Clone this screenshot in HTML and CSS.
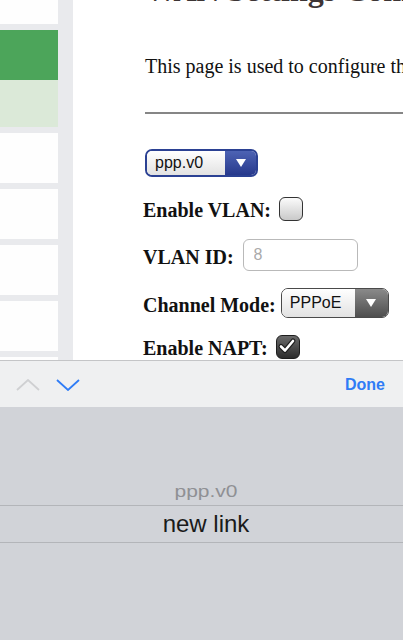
FILE: index.html
```html
<!DOCTYPE html>
<html lang="en">
  <head>
    <meta charset="UTF-8" />
    <meta name="viewport" content="width=device-width, initial-scale=1.0" />
    <title>WAN Settings</title>
    <link rel="stylesheet" href="styles.css">
  </head>
  <body>
    <div class="screen">
      <div class="page">
        <aside class="sidebar">
          <div class="nav-item nav-top"></div>
          <div class="nav-group">
            <div class="nav-item nav-active"></div>
            <div class="nav-item nav-sub"></div>
          </div>
          <div class="nav-item"></div>
          <div class="nav-item"></div>
          <div class="nav-item"></div>
          <div class="nav-item"></div>
          <div class="nav-item"></div>
        </aside>

        <main class="content">
          <h1>WAN Settings Configuration</h1>
          <p class="intro">This page is used to configure the parameters for your WAN.</p>
          <hr class="rule" />

          <div class="fields">
            <div class="row">
              <div class="select select-blue">
                <span class="select-value">ppp.v0</span>
                <span class="select-arrow">
                  <svg width="12" height="10" viewBox="0 0 12 10"><path d="M1 1 L11 1 L6 9 Z" fill="#fff" /></svg>
                </span>
              </div>
            </div>

            <div class="row">
              <label class="label">Enable VLAN:</label>
              <span class="check"></span>
            </div>

            <div class="row">
              <label class="label">VLAN ID:</label>
              <input class="text-input" type="text" placeholder="8" />
            </div>

            <div class="row">
              <label class="label">Channel Mode:</label>
              <div class="select select-gray">
                <span class="select-value">PPPoE</span>
                <span class="select-arrow">
                  <svg width="12" height="10" viewBox="0 0 12 10"><path d="M1 1 L11 1 L6 9 Z" fill="#fff" /></svg>
                </span>
              </div>
            </div>

            <div class="row row-last">
              <label class="label">Enable NAPT:</label>
              <span class="check checked">
                <svg width="24" height="24" viewBox="0 0 24 24">
                  <path d="M6 12.5 L10 16.5 L18 7" fill="none" stroke="#1e1e1e" stroke-width="5" stroke-linecap="round" stroke-linejoin="round" />
                  <path d="M6 12.5 L10 16.5 L18 7" fill="none" stroke="#fff" stroke-width="2.6" stroke-linecap="round" stroke-linejoin="round" />
                </svg>
              </span>
            </div>
          </div>
        </main>
      </div>

      <!-- barre du clavier iOS -->
      <div class="toolbar">
        <div class="toolbar-arrows">
          <svg width="24" height="12" viewBox="0 0 24 12"><path d="M1 11 L12 1 L23 11" fill="none" stroke="#cfd0d2" stroke-width="1.8" /></svg>
          <svg width="24" height="12" viewBox="0 0 24 12"><path d="M1 1 L12 11 L23 1" fill="none" stroke="#2f7cf6" stroke-width="1.8" /></svg>
        </div>
        <span class="done">Done</span>
      </div>

      <div class="picker">
        <div class="picker-item picker-dim">ppp.v0</div>
        <div class="picker-item picker-selected">new link</div>
      </div>
    </div>
  </body>
</html>
```

FILE: styles.css
```css
* {
  margin: 0;
  padding: 0;
  box-sizing: border-box;
}

body {
  width: 403px;
  height: 640px;
  overflow: hidden;
  background-color: #fff;
  font-family: "Liberation Serif", serif;
}

.screen {
  display: flex;
  flex-direction: column;
  height: 640px;
}

.page {
  display: flex;
  height: 360px;
  overflow: hidden;
}

.sidebar {
  flex: 0 0 73px;
  display: flex;
  flex-direction: column;
  gap: 6px;
  padding-right: 15px;
  background-color: #e9eaed;
}

.nav-item {
  flex: 0 0 50px;
  background-color: #fefefe;
}

.nav-top {
  flex-basis: 24px;
}

.nav-group {
  display: flex;
  flex-direction: column;
}

.nav-active {
  background-color: #4ca55a;
}

.nav-sub {
  flex-basis: 47px;
  background-color: #dbe9d8;
}

.content {
  flex: 1;
  padding-left: 72px;
  white-space: nowrap;
  overflow: hidden;
  color: #111;
}

.content h1 {
  margin-top: -28px;
  font-size: 32px;
  line-height: 36px;
  color: #3d3535;
}

.intro {
  margin-top: 47px;
  font-size: 20px;
  line-height: 23px;
}

.rule {
  margin-top: 34px;
  height: 2px;
  border: none;
  background-color: #868686;
}

.fields {
  display: flex;
  flex-direction: column;
  gap: 17px;
  margin-top: 35px;
}

.row {
  display: flex;
  align-items: center;
  gap: 8px;
  min-height: 28px;
}

.row-last {
  margin-top: -3px;
}

.label {
  margin-left: -2px;
  font-weight: 700;
  font-size: 20px;
  line-height: 23px;
  padding-top: 5px;
}

.select {
  display: flex;
  height: 28px;
  border-radius: 7px;
  overflow: hidden;
  font-family: "Liberation Sans", sans-serif;
  font-size: 16px;
  color: #111;
}

.select-value {
  display: flex;
  align-items: center;
  flex: 1;
  padding-left: 8px;
  background: linear-gradient(#ffffff, #e2e2e2);
}

.select-arrow {
  display: flex;
  align-items: center;
  justify-content: center;
  width: 31px;
}

.select-blue {
  width: 113px;
  border: 2px solid #2b4193;
}

.select-blue .select-arrow {
  background: linear-gradient(#4d63b4, #27398c);
}

.select-gray {
  width: 108px;
  height: 30px;
  margin-left: -3px;
  border: 1.5px solid #4a4a4a;
}

.select-gray .select-arrow {
  width: 33px;
  background: linear-gradient(#8a8a8a, #4e4e4e);
}

.check {
  display: block;
  width: 24px;
  height: 24px;
  border: 1.5px solid #333;
  border-radius: 6px;
  background: linear-gradient(#fbfbfb, #c9c9c9);
  margin-top: 1px;
}

.check.checked {
  border-color: #1e1e1e;
  background: linear-gradient(#6a6a6a, #2c2c2c);
}

.check svg {
  display: block;
  margin: -1.5px;
}

.text-input {
  width: 115px;
  height: 32px;
  margin-left: 1px;
  padding-left: 10px;
  border: 1px solid #b9b9b9;
  border-radius: 6px;
  font-family: "Liberation Sans", sans-serif;
  font-size: 16px;
  outline: none;
}

.text-input::placeholder {
  color: #aaa;
}

.toolbar {
  display: flex;
  align-items: center;
  justify-content: space-between;
  height: 47px;
  padding: 0 18px 0 16px;
  border-top: 1px solid #c4c5c7;
  background-color: #eff0f1;
}

.toolbar-arrows {
  display: flex;
  gap: 16px;
  margin-top: 1px;
}

.toolbar-arrows svg {
  display: block;
}

.done {
  font-family: "Liberation Sans", sans-serif;
  font-weight: 700;
  font-size: 16px;
  color: #2f7cf6;
  margin-top: 2px;
}

.picker {
  flex: 1;
  padding-top: 74px;
  background-color: #d1d3d8;
  font-family: "Liberation Sans", sans-serif;
  text-align: center;
}

.picker-item {
  padding-left: 9px;
}

.picker-dim {
  height: 24px;
  font-size: 21px;
  line-height: 20px;
  color: #8f9094;
  transform: scaleY(0.82);
}

.picker-selected {
  height: 38px;
  font-size: 24px;
  line-height: 36px;
  color: #1a1a1a;
  border-top: 1px solid #b3b5b9;
  border-bottom: 1px solid #b3b5b9;
}
```
